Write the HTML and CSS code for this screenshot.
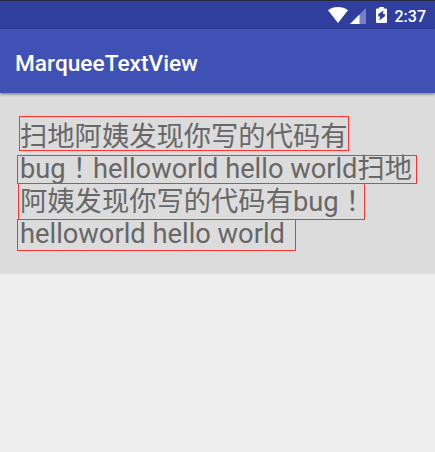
FILE: index.html
```html
<!DOCTYPE html>
<html lang="zh-CN">
<head>
<meta charset="utf-8">
<title>MarqueeTextView</title>
<link rel="stylesheet" href="styles.css">
</head>
<body>
<div class="screen">
  <div class="status-bar">
    <svg class="wifi" width="20" height="16" viewBox="0 0 20 16"><path d="M0 3.2Q4.300 0 10 0Q15.700 0 20 3.200L10 16Z" fill="#fff"/></svg>
    <svg class="signal" width="16" height="16" viewBox="0 0 16 16"><path d="M0 16L16 0V16Z" fill="#7780c1"/><path d="M0 16L9.500 6.500V16Z" fill="#fff"/></svg>
    <svg class="battery" width="11" height="16" viewBox="0 0 11 16"><path d="M3.200 0H7.800V1.500H10Q11 1.500 11 2.500V15Q11 16 10 16H1Q0 16 0 15V2.500Q0 1.500 1 1.500H3.200Z" fill="#fff"/><path d="M7.600 3.500L2.300 7V9.600H4.200L3.200 13.600L8.900 9.200V7H6.900Z" fill="#303f9f"/></svg>
    <span class="clock">2:37</span>
  </div>
  <header class="app-bar"><h1 class="title">MarqueeTextView</h1></header>
  <main class="content">
    <p class="text">
      <span class="line">扫地阿姨发现你写的代码有</span>
      <span class="line line-mixed">bug<span class="mark" lang="zh-TW">！</span>helloworld hello world扫地</span>
      <span class="line">阿姨发现你写的代码有bug<span class="mark" lang="zh-TW">！</span></span>
      <span class="line">helloworld hello world</span>
    </p>
    <div class="bounds bounds-1"></div>
    <div class="bounds bounds-2"></div>
    <div class="bounds bounds-3"></div>
    <div class="bounds bounds-4"></div>
  </main>
</div>
</body>
</html>
```
FILE: styles.css
```css
* { box-sizing: border-box; }
body {
  margin: 0;
  background: #eeeeee;
  font-family: Roboto, "Noto Sans CJK SC", sans-serif;
}
.screen { height: 452px; overflow: hidden; }
.status-bar {
  display: flex;
  align-items: flex-start;
  justify-content: flex-end;
  height: 29px;
  padding: 6px 9px 0 0;
  border-top: 1px solid #252b3c;
  background: #303f9f;
  color: #fff;
}
.wifi { margin-right: 2px; }
.signal { margin: 1px 10px 0 0; }
.battery { margin-right: 8px; }
.clock { font-size: 16px; font-weight: 500; line-height: 20px; }
.app-bar {
  position: relative;
  z-index: 1;
  display: flex;
  align-items: center;
  height: 64px;
  padding: 6px 15px 0;
  background: #3f51b5;
  box-shadow: 0 1px 3px rgba(0, 0, 0, .5);
}
.title {
  margin: 0;
  color: #fff;
  font-size: 22.7px;
  font-weight: 500;
  line-height: 28px;
}
.content {
  position: relative;
  height: 181px;
  padding: 28px 0 0 20px;
  background: #dcdcdc;
}
.text {
  margin: 0;
  color: #676767;
  font-size: 27.3px;
}
.line {
  display: block;
  height: 32.4px;
  line-height: 32.4px;
  white-space: nowrap;
}
.line-mixed { font-size: 27.25px; }
.mark { font-family: "Noto Sans CJK TC", sans-serif; line-height: 1; }
.bounds { position: absolute; border: 1px solid #ff3232; }
.bounds-1 { left: 19px; top: 23px; width: 330px; height: 35px; }
.bounds-2 { left: 17px; top: 62px; width: 400px; height: 29px; }
.bounds-3 { left: 18px; top: 90px; width: 347px; height: 37px; }
.bounds-4 { left: 17px; top: 126px; width: 279px; height: 32px; }
```
